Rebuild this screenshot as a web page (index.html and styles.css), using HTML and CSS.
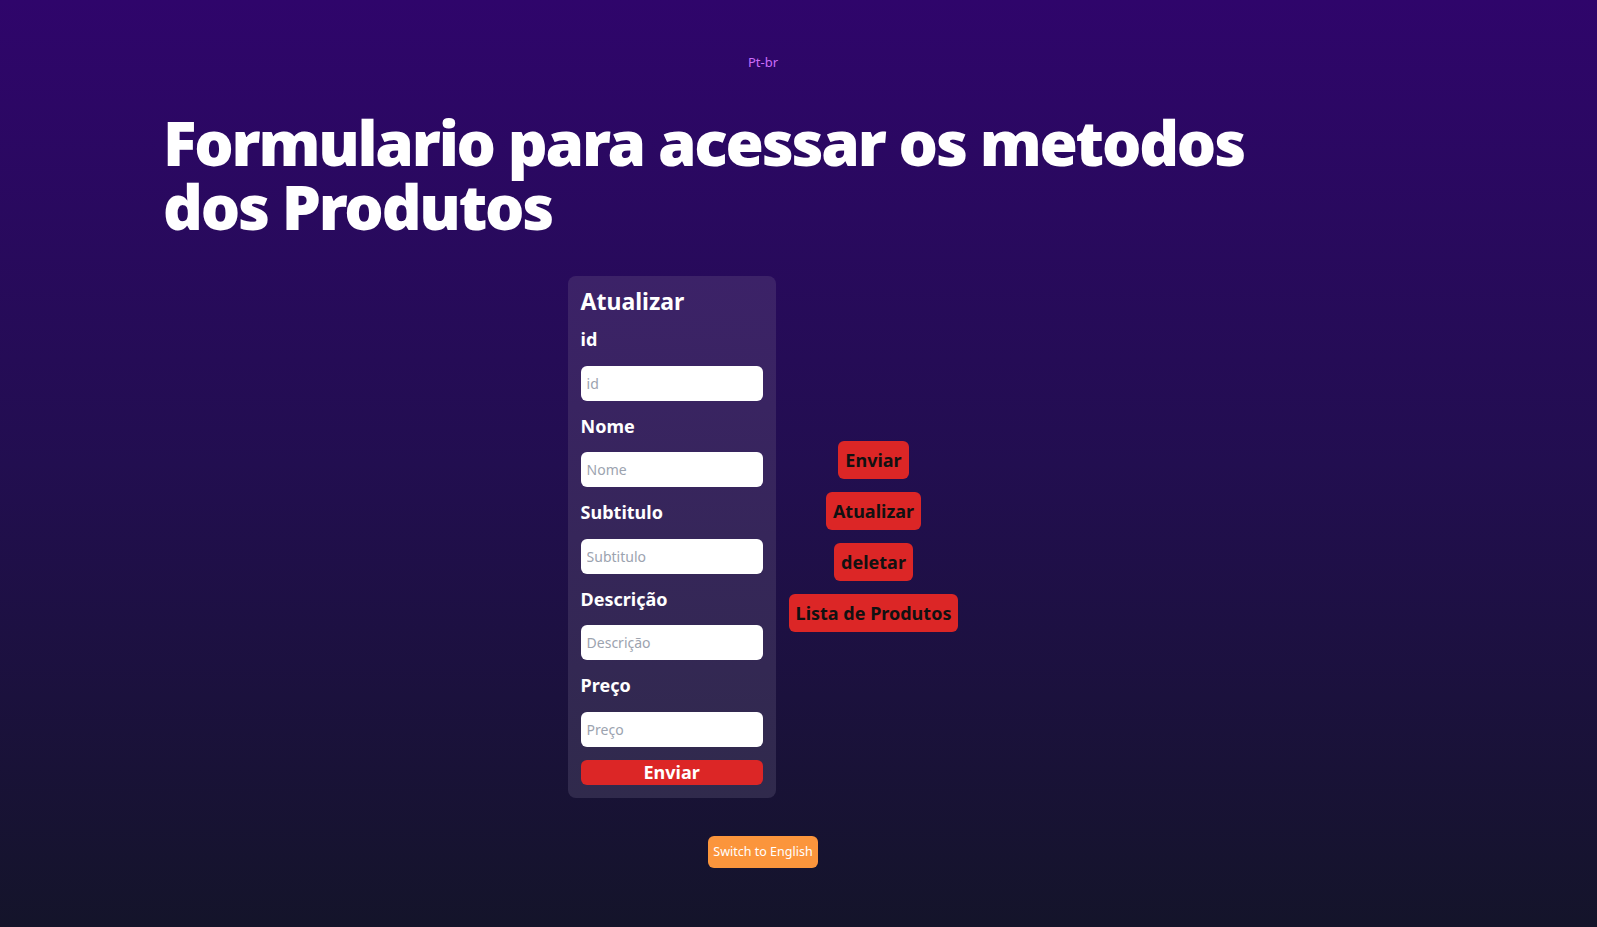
FILE: index.html
```html
<!DOCTYPE html>
<html lang="pt-br">
<head>
<meta charset="utf-8">
<title>Produtos</title>
<link rel="stylesheet" href="styles.css">
</head>
<body>
<div class="wrap">
  <p class="lang">Pt-br</p>
  <h1 class="title">Formulario para acessar os metodos dos Produtos</h1>
  <div class="row">
    <form class="card">
      <h2 class="card-title">Atualizar</h2>
      <label class="lbl" for="id">id</label>
      <input class="inp" id="id" placeholder="id">
      <label class="lbl" for="nome">Nome</label>
      <input class="inp" id="nome" placeholder="Nome">
      <label class="lbl" for="sub">Subtitulo</label>
      <input class="inp" id="sub" placeholder="Subtitulo">
      <label class="lbl" for="desc">Descrição</label>
      <input class="inp" id="desc" placeholder="Descrição">
      <label class="lbl" for="preco">Preço</label>
      <input class="inp" id="preco" placeholder="Preço">
      <button type="button" class="submit">Enviar</button>
    </form>
    <div class="actions">
      <button type="button" class="act">Enviar</button>
      <button type="button" class="act">Atualizar</button>
      <button type="button" class="act">deletar</button>
      <button type="button" class="act">Lista de Produtos</button>
    </div>
  </div>
  <div class="switch-row">
    <button type="button" class="switch">Switch to English</button>
  </div>
</div>
</body>
</html>
```

FILE: styles.css
```css
html, body {
  margin: 0;
  padding: 0;
}
body {
  min-height: 927px;
  background: linear-gradient(to bottom, #2f056b 0%, #220e50 50%, #14142a 100%);
  font-family: "Noto Sans", "Open Sans", sans-serif;
  color: #fff;
}
.wrap {
  width: 1200px;
  margin-left: 163px;
  padding-top: 52px;
  padding-bottom: 60px;
}
.lang {
  margin: 0;
  text-align: center;
  font-size: 13px;
  line-height: 20px;
  color: #cc6cfa;
}
.title {
  max-width: 1130px;
  margin: 38px 0 0 0;
  font-family: "Noto Sans", "Open Sans", sans-serif;
  font-weight: 900;
  font-size: 62px;
  line-height: 64px;
  letter-spacing: -2.2px;
  color: #fff;
}
.row {
  margin-top: 38px;
  display: flex;
  justify-content: center;
  align-items: center;
  gap: 13px;
}
.card {
  width: 208px;
  box-sizing: border-box;
  padding: 13px;
  border-radius: 8px;
  background: linear-gradient(to bottom, #3c2268, #302a4c);
  display: flex;
  flex-direction: column;
  gap: 12px;
  margin: 0;
}
.card-title {
  margin: 0;
  font-size: 23px;
  line-height: 25px;
  font-weight: 700;
}
.lbl {
  font-size: 18px;
  font-weight: 700;
  line-height: 27.5px;
}
.inp {
  height: 35px;
  box-sizing: border-box;
  border: none;
  border-radius: 6px;
  padding: 0 6px;
  font-family: "Noto Sans", sans-serif;
  font-size: 14px;
  color: #333;
  background: #fff;
  outline: none;
}
.inp::placeholder {
  color: #9ca3af;
}
.submit {
  height: 25px;
  border: none;
  border-radius: 6px;
  background: #dc2626;
  color: #fff;
  font-family: "Noto Sans", sans-serif;
  font-weight: 700;
  font-size: 18px;
  line-height: 25px;
  padding: 0;
  margin-top: 1px;
}
.actions {
  display: flex;
  flex-direction: column;
  align-items: center;
  gap: 13px;
}
.act {
  height: 38px;
  padding: 0 7px;
  border: none;
  border-radius: 6px;
  background: #dc2626;
  color: #111;
  font-family: "Noto Sans", sans-serif;
  font-weight: 700;
  font-size: 18px;
}
.switch-row {
  margin-top: 38px;
  display: flex;
  justify-content: center;
}
.switch {
  height: 32px;
  padding: 0 5px;
  border: none;
  border-radius: 6px;
  background: #fb953c;
  color: #fff;
  font-family: "Noto Sans", sans-serif;
  font-size: 12.5px;
}
```
